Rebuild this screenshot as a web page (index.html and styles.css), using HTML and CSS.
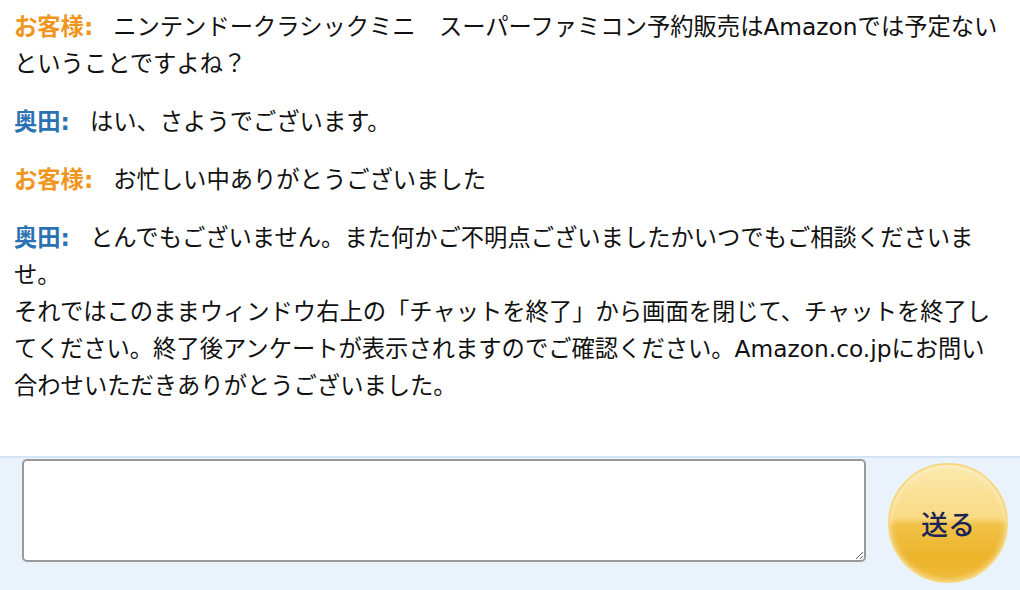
FILE: index.html
```html
<!DOCTYPE html>
<html lang="ja">
<head>
<meta charset="utf-8">
<link rel="stylesheet" href="styles.css">
</head>
<body>
<div class="chat">
  <div class="log">
    <p class="msg"><b class="who cust">お客様:</b>ニンテンドークラシックミニ　スーパーファミコン予約販売はAmazonでは予定ないということですよね？</p>
    <p class="msg"><b class="who agent">奥田:</b>はい、さようでございます。</p>
    <p class="msg"><b class="who cust">お客様:</b>お忙しい中ありがとうございました</p>
    <p class="msg"><b class="who agent">奥田:</b>とんでもございません。また何かご不明点ございましたかいつでもご相談くださいませ。<br>それではこのままウィンドウ右上の「チャットを終了」から画面を閉じて、チャットを終了してください。終了後アンケートが表示されますのでご確認ください。Amazon.co.jpにお問い合わせいただきありがとうございました。</p>
  </div>
  <div class="composer">
    <textarea class="input"></textarea>
    <button class="send">送る</button>
  </div>
</div>
</body>
</html>
```

FILE: styles.css
```css
html, body {
  margin: 0;
  padding: 0;
  background: #ffffff;
}
.chat {
  width: 1020px;
  height: 590px;
  display: flex;
  flex-direction: column;
  overflow: hidden;
  font-family: "DejaVu Sans", "Noto Sans CJK JP", sans-serif;
}
.log {
  flex: 1;
  padding: 8px 16px 0 14px;
}
.msg {
  margin: 0 0 21px 0;
  font-size: 23.3px;
  line-height: 37px;
  color: #111111;
}
.who {
  font-weight: bold;
  margin-right: 20px;
}
.cust { color: #f0961e; }
.agent { color: #2b72b2; }
.composer {
  height: 134px;
  flex: none;
  background: #eaf2fc;
  border-top: 2px solid #d4e4f2;
  display: flex;
  align-items: flex-start;
  padding: 1px 0 0 22px;
  gap: 22px;
  box-sizing: border-box;
}
.input {
  width: 844px;
  height: 103px;
  box-sizing: border-box;
  border: 2px solid #9b9b9b;
  border-radius: 5px;
  background: #ffffff;
  margin: 0;
  resize: both;
}
.send {
  width: 120px;
  height: 120px;
  margin-top: 4px;
  border-radius: 50%;
  border: 2px solid #f6d981;
  background: linear-gradient(to bottom, #fbe9ae 0%, #f9da83 45%, #f1c046 52%, #edb42a 80%, #efbb38 100%);
  box-shadow: inset 0 0 6px rgba(255,255,255,0.6);
  color: #1a2456;
  font-family: "Noto Sans CJK JP", sans-serif;
  font-size: 27px;
  font-weight: 500;
  line-height: 1;
  padding: 0;
}
```
